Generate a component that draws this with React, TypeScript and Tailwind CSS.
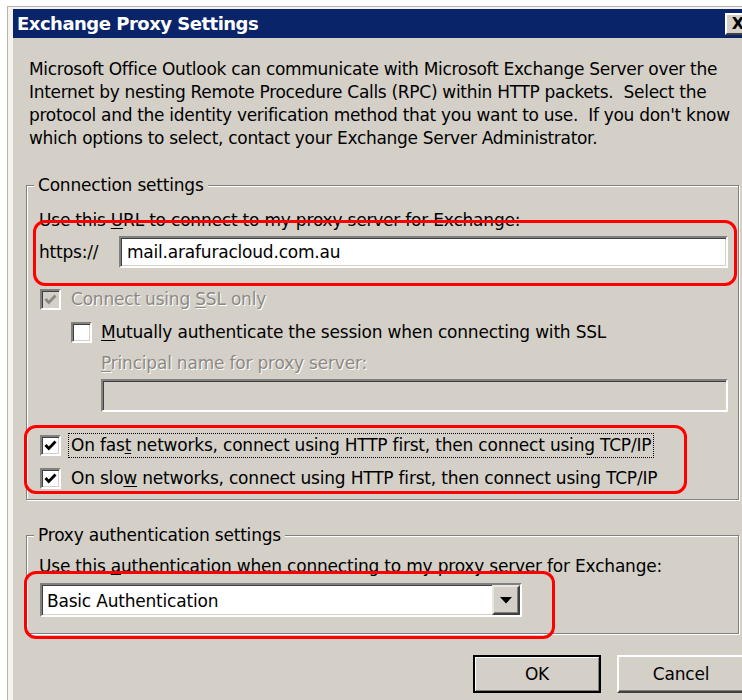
import React from "react";

const sunken =
  "border-2 border-t-[#808080] border-l-[#808080] border-b-white border-r-white shadow-[inset_1px_1px_0_#404040,inset_-1px_-1px_0_#d4d0c8]";

const disabledText = "text-[#8c8984] [text-shadow:1px_1px_0_#ffffff]";

function Check({ checked, disabled }: { checked?: boolean; disabled?: boolean }) {
  return (
    <span
      className={`${sunken} flex h-[21px] w-[21px] shrink-0 items-center justify-center ${
        disabled ? "bg-[#d4d0c8]" : "bg-white"
      }`}
    >
      {checked && (
        <svg width="13" height="13" viewBox="0 0 13 13">
          <path
            d="M1.5 6 L4.8 9.5 L11.5 2.5"
            fill="none"
            stroke={disabled ? "#8c8984" : "#000"}
            strokeWidth="2.8"
          />
        </svg>
      )}
    </span>
  );
}

function GroupBox({
  title,
  className,
  children,
}: {
  title: string;
  className?: string;
  children: React.ReactNode;
}) {
  return (
    <fieldset
      className={`border border-[#808080] shadow-[1px_1px_0_#ffffff,inset_1px_1px_0_#ffffff] pl-[12px] pr-[10px] ${className ?? ""}`}
    >
      <legend className="ml-[-5px] bg-[#d4d0c8] px-[4px]">{title}</legend>
      {children}
    </fieldset>
  );
}

export default function App() {
  return (
    <div className="relative h-[700px] w-[742px] overflow-hidden bg-white font-['DejaVu_Sans',sans-serif] text-[17px] leading-[23px] tracking-[-0.2px] text-black">
      {/* window frame */}
      <div className="ml-[7px] mt-[6px] w-[760px] border-l border-t border-[#b8b4ac] bg-[#d4d0c8]">
        <div className="border-l-[5px] border-t-[2px] border-[#f4f3f0]">
          {/* title bar */}
          <div className="flex h-[29px] items-center justify-between bg-[#0a246a] pl-[4px] pr-[16px]">
            <span className="text-[18px] font-bold tracking-[-0.5px] text-white">Exchange Proxy Settings</span>
            <span className="flex h-[22px] w-[26px] items-center justify-center border-2 border-t-white border-l-white border-r-[#404040] border-b-[#404040] bg-[#d4d0c8] text-[16px] font-bold leading-none tracking-normal text-black">
              X
            </span>
          </div>

          {/* dialog body */}
          <div className="pb-[20px] pl-[13px] pr-[15px] pt-[20px]">
            <p className="ml-[3px] whitespace-nowrap tracking-[-0.3px]">
              Microsoft Office Outlook can communicate with Microsoft Exchange Server over the
              <br />
              Internet by nesting Remote Procedure Calls (RPC) within HTTP packets.&nbsp; Select the
              <br />
              protocol and the identity verification method that you want to use.&nbsp; If you don't know
              <br />
              which options to select, contact your Exchange Server Administrator.
            </p>

            <GroupBox title="Connection settings" className="mt-[24px] w-[713px] pb-[8px] pt-[12px]">
              <div>
                Use this <span className="underline underline-offset-2">U</span>RL to connect to my proxy server for Exchange:
              </div>
              <div className="mt-[4px] flex items-center">
                <span className="w-[80px]">https://</span>
                <div className={`${sunken} flex h-[32px] flex-1 items-center bg-white pl-[6px]`}>
                  mail.arafuracloud.com.au
                </div>
              </div>

              <div className="mt-[20px] flex items-center gap-[10px] pl-[1px]">
                <Check checked disabled />
                <span className={disabledText}>
                  Connect using <span className="underline underline-offset-2">S</span>SL only
                </span>
              </div>

              <div className="mt-[10px] flex items-center gap-[9px] pl-[32px]">
                <Check />
                <span>
                  <span className="underline underline-offset-2">M</span>utually authenticate the session when connecting with SSL
                </span>
              </div>

              <div className={`mt-[8px] pl-[62px] ${disabledText}`}>
                <span className="underline underline-offset-2">P</span>rincipal name for proxy server:
              </div>
              <div className="mt-[4px] pl-[62px]">
                <div className={`${sunken} h-[33px] bg-[#d4d0c8]`} />
              </div>

              <div className="mt-[21px] flex items-center gap-[7px] pl-[1px]">
                <Check checked />
                <span className="border border-dotted border-black px-[2px]">
                  On fas<span className="underline underline-offset-2">t</span> networks, connect using HTTP first, then connect using TCP/IP
                </span>
              </div>
              <div className="mt-[8px] flex items-center gap-[7px] pl-[1px]">
                <Check checked />
                <span className="border border-transparent px-[2px]">
                  On slo<span className="underline underline-offset-2">w</span> networks, connect using HTTP first, then connect using TCP/IP
                </span>
              </div>
            </GroupBox>

            <GroupBox title="Proxy authentication settings" className="mt-[24px] w-[713px] pb-[16px] pt-[8px]">
              <div>
                Use this <span className="underline underline-offset-2">a</span>uthentication when connecting to my proxy server for Exchange:
              </div>
              <div className={`${sunken} ml-[1px] mt-[5px] flex h-[34px] w-[482px] items-center bg-white`}>
                <span className="flex-1 pl-[5px] pt-[3px]">Basic Authentication</span>
                <span className="flex h-[30px] w-[28px] items-center justify-center border-2 border-t-[#e8e6e1] border-l-[#e8e6e1] border-r-[#404040] border-b-[#404040] bg-[#d4d0c8] shadow-[inset_-1px_-1px_0_#808080]">
                  <svg width="12" height="7" viewBox="0 0 12 7">
                    <path d="M0 0 H12 L6 6.5 Z" fill="#000" />
                  </svg>
                </span>
              </div>
            </GroupBox>

            <div className="mr-[7px] mt-[21px] flex justify-end gap-[16px]">
              <button className="flex h-[38px] w-[128px] items-center justify-center border-2 border-black bg-[#d4d0c8] shadow-[inset_1px_1px_0_#ffffff,inset_-1px_-1px_0_#808080]">
                OK
              </button>
              <button className="flex h-[38px] w-[128px] items-center justify-center border-2 border-t-white border-l-white border-r-[#404040] border-b-[#404040] bg-[#d4d0c8] shadow-[inset_-1px_-1px_0_#808080]">
                Cancel
              </button>
            </div>
          </div>
        </div>
      </div>

      {/* red highlight marks drawn over the dialog */}
      <div className="pointer-events-none absolute left-[33px] top-[220px] h-[66px] w-[704px] rounded-[12px] border-[3px] border-[#ff0000]" />
      <div className="pointer-events-none absolute left-[24px] top-[425px] h-[69px] w-[663px] rounded-[12px] border-[3px] border-[#ff0000]" />
      <div className="pointer-events-none absolute left-[24px] top-[571px] h-[68px] w-[531px] rounded-[12px] border-[3px] border-[#ff0000]" />
    </div>
  );
}
